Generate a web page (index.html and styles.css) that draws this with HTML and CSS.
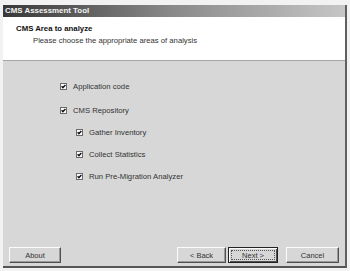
FILE: index.html
```html
<!DOCTYPE html>
<html lang="en">
<head>
  <meta charset="UTF-8" />
  <title>CMS Assessment Tool</title>
  <link rel="stylesheet" href="styles.css">
</head>
<body>
  <div class="window">
    <div class="titlebar">CMS Assessment Tool</div>

    <div class="header">
      <h2>CMS Area to analyze</h2>
      <p>Please choose the appropriate areas of analysis</p>
    </div>

    <div class="content">
      <ul class="options">
        <li class="option first">
          <svg class="check" width="7" height="7" viewBox="0 0 7 7"><rect x="0.5" y="0.5" width="6" height="6" fill="#fff" stroke="#6a6a6a"/><path d="M1.6 3.2 L2.9 4.6 L5.4 1.9" stroke="#111" stroke-width="1.4" fill="none"/></svg>
          <span>Application code</span>
        </li>
        <li class="option">
          <svg class="check" width="7" height="7" viewBox="0 0 7 7"><rect x="0.5" y="0.5" width="6" height="6" fill="#fff" stroke="#6a6a6a"/><path d="M1.6 3.2 L2.9 4.6 L5.4 1.9" stroke="#111" stroke-width="1.4" fill="none"/></svg>
          <span>CMS Repository</span>
        </li>
        <li class="option sub">
          <svg class="check" width="7" height="7" viewBox="0 0 7 7"><rect x="0.5" y="0.5" width="6" height="6" fill="#fff" stroke="#6a6a6a"/><path d="M1.6 3.2 L2.9 4.6 L5.4 1.9" stroke="#111" stroke-width="1.4" fill="none"/></svg>
          <span>Gather Inventory</span>
        </li>
        <li class="option sub">
          <svg class="check" width="7" height="7" viewBox="0 0 7 7"><rect x="0.5" y="0.5" width="6" height="6" fill="#fff" stroke="#6a6a6a"/><path d="M1.6 3.2 L2.9 4.6 L5.4 1.9" stroke="#111" stroke-width="1.4" fill="none"/></svg>
          <span>Collect Statistics</span>
        </li>
        <li class="option sub">
          <svg class="check" width="7" height="7" viewBox="0 0 7 7"><rect x="0.5" y="0.5" width="6" height="6" fill="#fff" stroke="#6a6a6a"/><path d="M1.6 3.2 L2.9 4.6 L5.4 1.9" stroke="#111" stroke-width="1.4" fill="none"/></svg>
          <span>Run Pre-Migration Analyzer</span>
        </li>
      </ul>

      <div class="footer">
        <button class="btn about">About</button>
        <button class="btn back">&lt; Back</button>
        <button class="btn next default"><span>Next &gt;</span></button>
        <button class="btn cancel">Cancel</button>
      </div>
    </div>
  </div>
</body>
</html>
```

FILE: styles.css
```css
* {
  margin: 0;
  padding: 0;
  box-sizing: border-box;
  font-family: 'Liberation Sans', Arial, sans-serif;
}

body {
  background-color: #f2f2f2;
  padding: 5px 0 0 3px;
  font-size: 7.7px;
  color: #222;
}

.window {
  width: 344px;
  height: 263px;
  display: flex;
  flex-direction: column;
  background-color: #d7d7d7;
  border-right: 2px solid #606060;
  border-bottom: 2px solid #555;
}

.titlebar {
  height: 12px;
  line-height: 12px;
  padding-left: 2px;
  font-weight: bold;
  font-size: 7.9px;
  color: #f4f4f4;
  background: linear-gradient(to right, #383838, #8a8a8a 50%, #c6c6c6);
}

.header {
  height: 44px;
  background-color: #fff;
  border-bottom: 1px solid #a4a4a4;
  padding: 7px 0 0 13px;
}

.header h2 {
  font-size: 7.8px;
  line-height: 9px;
  font-weight: bold;
  color: #111;
}

.header p {
  margin: 3px 0 0 17px;
  line-height: 9px;
  color: #333;
}

.content {
  flex: 1;
  display: flex;
  flex-direction: column;
  padding: 14px 6px 3px 6px;
}

.options {
  list-style: none;
}

.option {
  height: 22px;
  display: flex;
  align-items: center;
  gap: 6px;
  padding-left: 51px;
  color: #333;
}

.option.first {
  margin-bottom: 2px;
}

.option.sub {
  padding-left: 67px;
}

.check {
  display: block;
  flex-shrink: 0;
}

.footer {
  margin-top: auto;
  display: flex;
  align-items: center;
}

.btn {
  height: 16px;
  font-size: 7.5px;
  color: #333;
  background-color: #d7d7d7;
  border: 1px solid;
  border-color: #fbfbfb #505050 #505050 #fbfbfb;
  box-shadow: inset -1px -1px 0 #9a9a9a;
}

.about {
  width: 52px;
}

.back {
  width: 49px;
  margin-left: auto;
}

.next {
  width: 50px;
  margin-left: 2px;
  border: 1px solid #222;
  box-shadow: inset 1px 1px 0 #fbfbfb, inset -1px -1px 0 #505050;
  padding: 2px;
}

.next span {
  display: block;
  height: 100%;
  line-height: 9px;
  border: 1px dotted #555;
}

.cancel {
  width: 53px;
  margin-left: 8px;
}
```
